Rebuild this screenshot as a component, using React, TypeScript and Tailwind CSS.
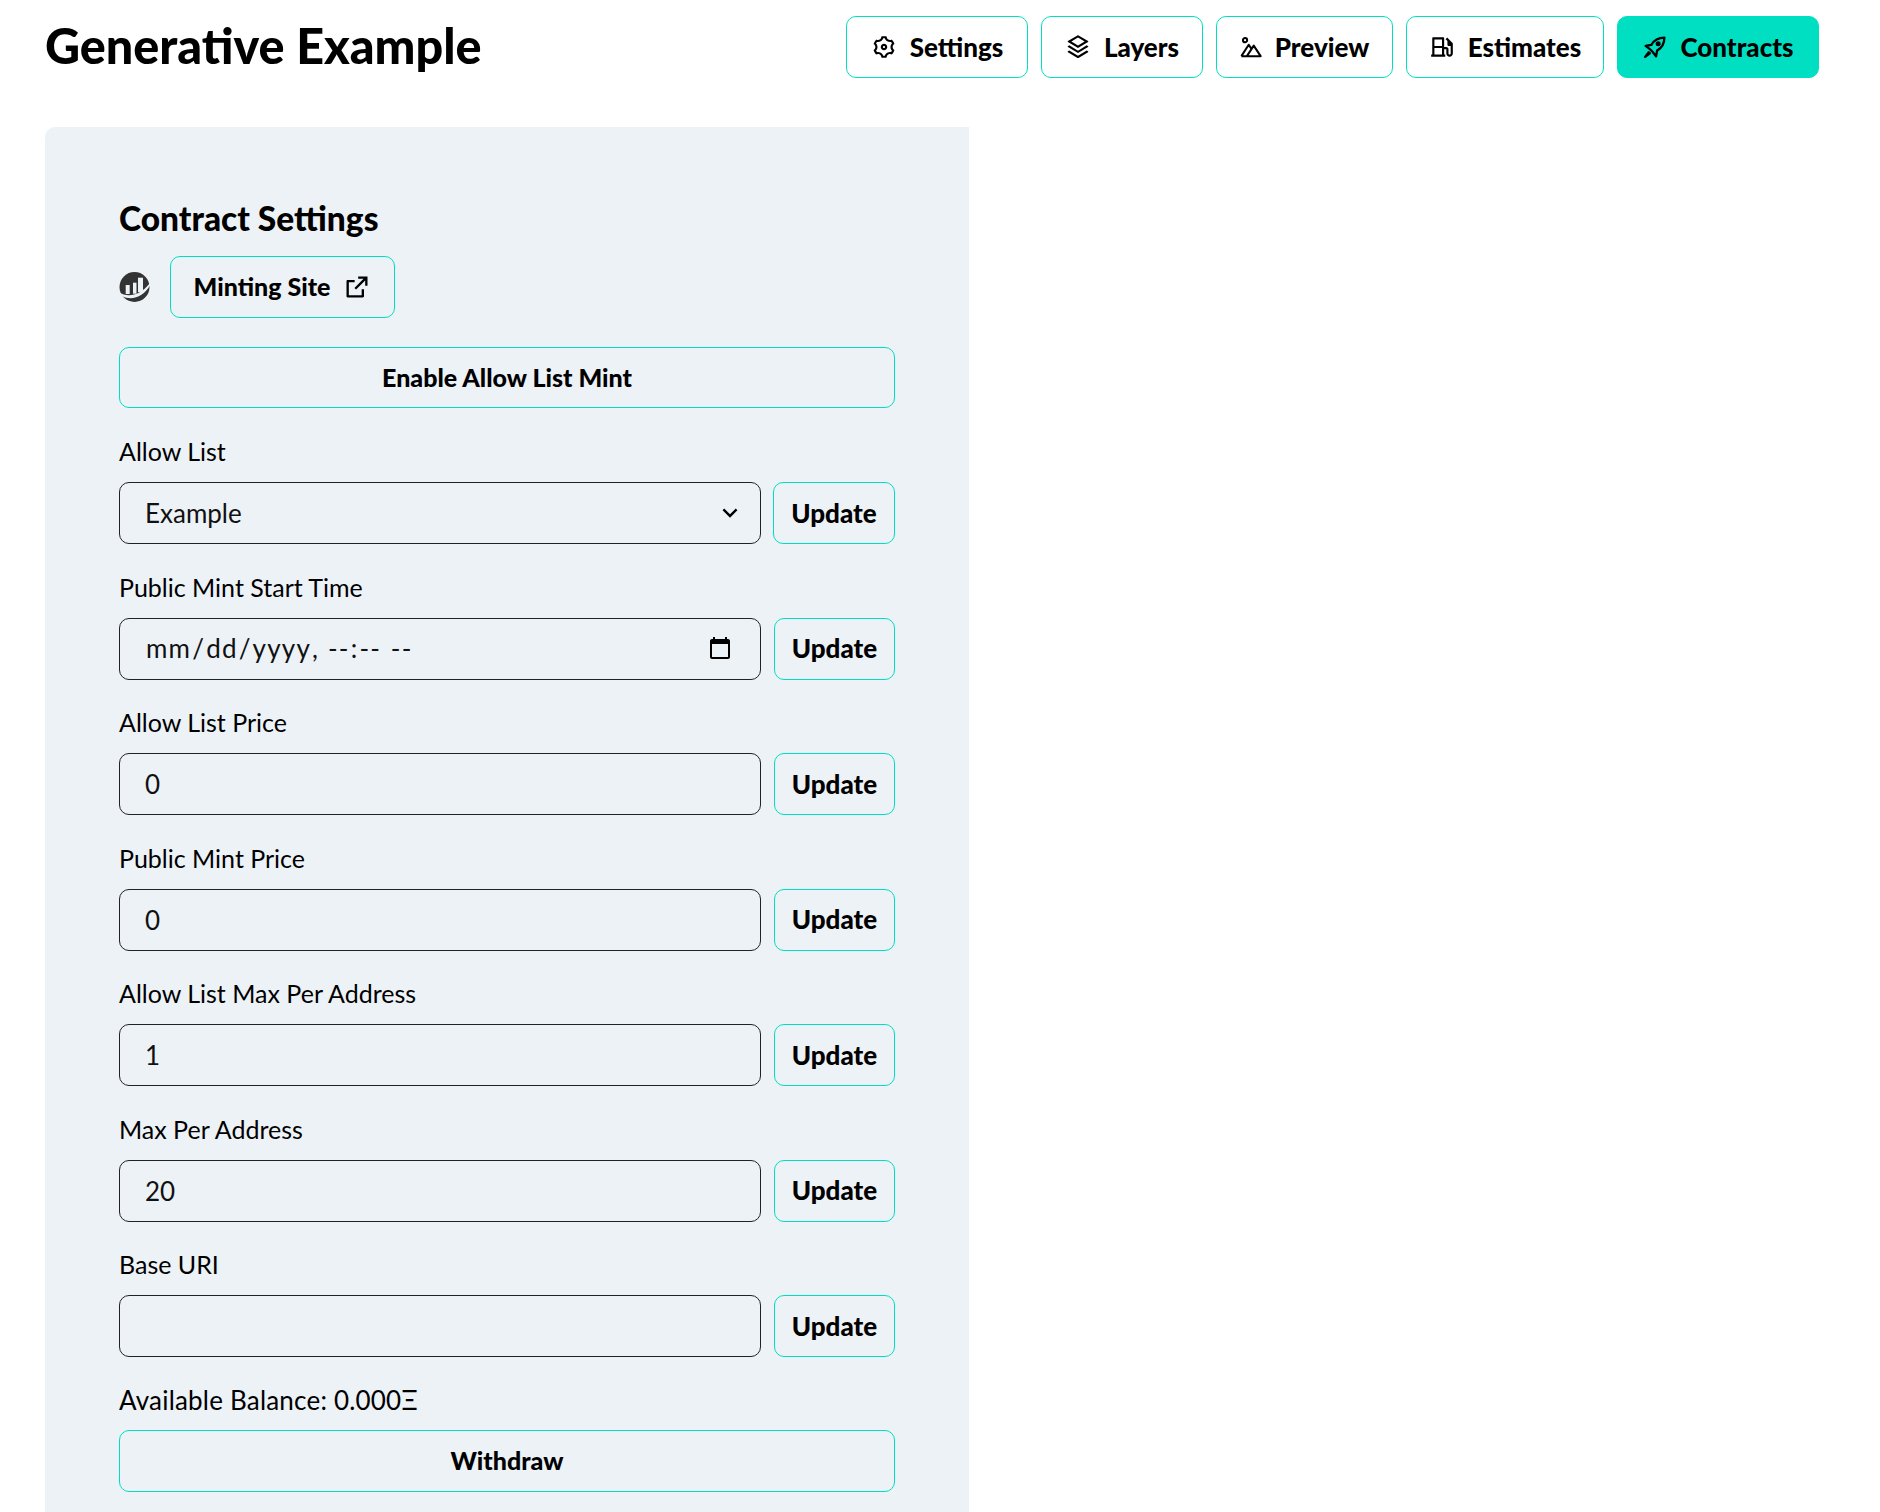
import React from "react";
import { RiSettings3Line, RiStackLine, RiGasStationLine, RiExternalLinkLine, RiArrowDownSLine } from "react-icons/ri";

const font = "font-['Lato','Liberation_Sans',sans-serif]";

function MountainIcon() {
  return (
    <svg width="22" height="22" viewBox="0 0 24 24" fill="none" stroke="currentColor" strokeWidth="2.200" strokeLinejoin="round" aria-hidden="true">
      <circle cx="5.500" cy="4.500" r="2.300" />
      <path d="M1.500 22 L9.500 9.500 L12.500 14 M7.500 22 L15 10.500 L22.500 22 Z M1.500 22 H7.500" />
    </svg>
  );
}

function RocketIcon() {
  return (
    <svg width="25" height="25" viewBox="0 0 24 24" fill="none" stroke="currentColor" strokeWidth="2.200" strokeLinejoin="round" aria-hidden="true">
      <path d="M21.500 2.500 C16 2.500 11.500 5 9 9.500 L3.500 10.500 L7.500 13.500 L10.500 16.500 L13.500 20.500 L14.500 15 C19 12.500 21.500 8 21.500 2.500 Z" />
      <circle cx="15.500" cy="8.500" r="1.300" fill="currentColor" />
      <path d="M6.500 16.500 L3 21 L7.500 17.500 Z" fill="currentColor" />
    </svg>
  );
}

function NavButton({ icon, label, w, active }: { icon: React.ReactNode; label: string; w: string; active?: boolean }) {
  return (
    <button className={`h-[62px] ${w} flex items-center justify-center gap-[13px] rounded-[10px] border border-[#00dfc1] text-[26px] font-black text-black ${active ? "bg-[#00dfc1]" : "bg-white"}`}>
      <span className="text-[26px]">{icon}</span>
      {label}
    </button>
  );
}

function Field({ label, children, narrow }: { label: string; children: React.ReactNode; narrow?: boolean }) {
  return (
    <div className="flex flex-col">
      <label className="text-[25px] leading-[34px] mb-[14px] text-black">{label}</label>
      <div className={`flex ${narrow ? "gap-[13px]" : "gap-[12px]"}`}>
        <div className="relative w-[642px] h-[62px]">{children}</div>
        <button className="flex-1 h-[62px] rounded-[10px] border border-[#00dfc1] text-[26px] font-black text-black">Update</button>
      </div>
    </div>
  );
}

const inputCls = "w-full h-full rounded-[10px] border border-[#222] bg-transparent pl-[25px] pr-[25px] text-[26px] text-[#111] outline-none";

export default function App() {
  return (
    <div className={`${font} w-[1880px] h-[1512px] overflow-hidden bg-white`}>
      <header className="flex items-start justify-between pl-[45px] pr-[61px] pt-[16px]">
        <h1 className="text-[48.500px] leading-[60px] font-black text-black -mt-[1px]">Generative Example</h1>
        <nav className="flex gap-[13px]">
          <NavButton icon={<RiSettings3Line />} label="Settings" w="w-[182px]" />
          <NavButton icon={<RiStackLine />} label="Layers" w="w-[162px]" />
          <NavButton icon={<MountainIcon />} label="Preview" w="w-[177px]" />
          <NavButton icon={<RiGasStationLine />} label="Estimates" w="w-[198px]" />
          <NavButton icon={<RocketIcon />} label="Contracts" w="w-[202px]" active />
        </nav>
      </header>

      <main className="ml-[45px] mt-[49px] w-[924px] h-[1385px] rounded-tl-[10px] bg-[#edf2f7] pl-[74px] pr-[74px] pt-[69px]">
        <h2 className="text-[33.500px] leading-[44px] font-black text-black">Contract Settings</h2>
        <div className="flex items-center gap-[20px] mt-[16px]">
          <svg width="31" height="30" viewBox="0 0 31 30" aria-hidden="true">
            <circle cx="15.500" cy="15" r="15" fill="#333" />
            <path d="M0 20.500 C8 25 20 25 31 11 L31 13.500 C26 22 18 27 9 26 C5 25.500 2 24 0 20.500Z" fill="#edf2f7" />
            <rect x="6.700" y="13" width="4" height="9" fill="#edf2f7" />
            <rect x="14" y="10.700" width="3.500" height="11" fill="#edf2f7" />
            <rect x="19" y="5.700" width="5" height="14.500" fill="#edf2f7" />
          </svg>
          <button className="w-[225px] h-[62px] flex items-center justify-center gap-[13px] rounded-[10px] border border-[#00dfc1] text-[25px] font-black text-black">
            Minting Site
            <RiExternalLinkLine className="text-[28px]" />
          </button>
        </div>
        <button className="w-full h-[61px] mt-[29px] rounded-[10px] border border-[#00dfc1] text-[25px] font-black text-black">Enable Allow List Mint</button>

        <div className="flex flex-col gap-[25.500px] mt-[26px]">
          <Field label="Allow List">
            <select className={`${inputCls} appearance-none`} defaultValue="Example">
              <option>Example</option>
            </select>
            <RiArrowDownSLine className="absolute right-[17px] top-[17px] text-[28px] text-black pointer-events-none" />
          </Field>
          <Field label="Public Mint Start Time" narrow>
            <input type="datetime-local" className={`${inputCls} tracking-[1.200px]`} />
          </Field>
          <Field label="Allow List Price" narrow>
            <input className={inputCls} defaultValue="0" />
          </Field>
          <Field label="Public Mint Price" narrow>
            <input className={inputCls} defaultValue="0" />
          </Field>
          <Field label="Allow List Max Per Address" narrow>
            <input className={inputCls} defaultValue="1" />
          </Field>
          <Field label="Max Per Address" narrow>
            <input className={inputCls} defaultValue="20" />
          </Field>
          <Field label="Base URI" narrow>
            <input className={inputCls} />
          </Field>
        </div>

        <p className="text-[26px] tracking-[0.200px] leading-[36px] text-black mt-[25px]">Available Balance: 0.000Ξ</p>
        <button className="w-full h-[62px] mt-[12px] rounded-[10px] border border-[#00dfc1] text-[25px] font-black text-black">Withdraw</button>
      </main>
    </div>
  );
}
